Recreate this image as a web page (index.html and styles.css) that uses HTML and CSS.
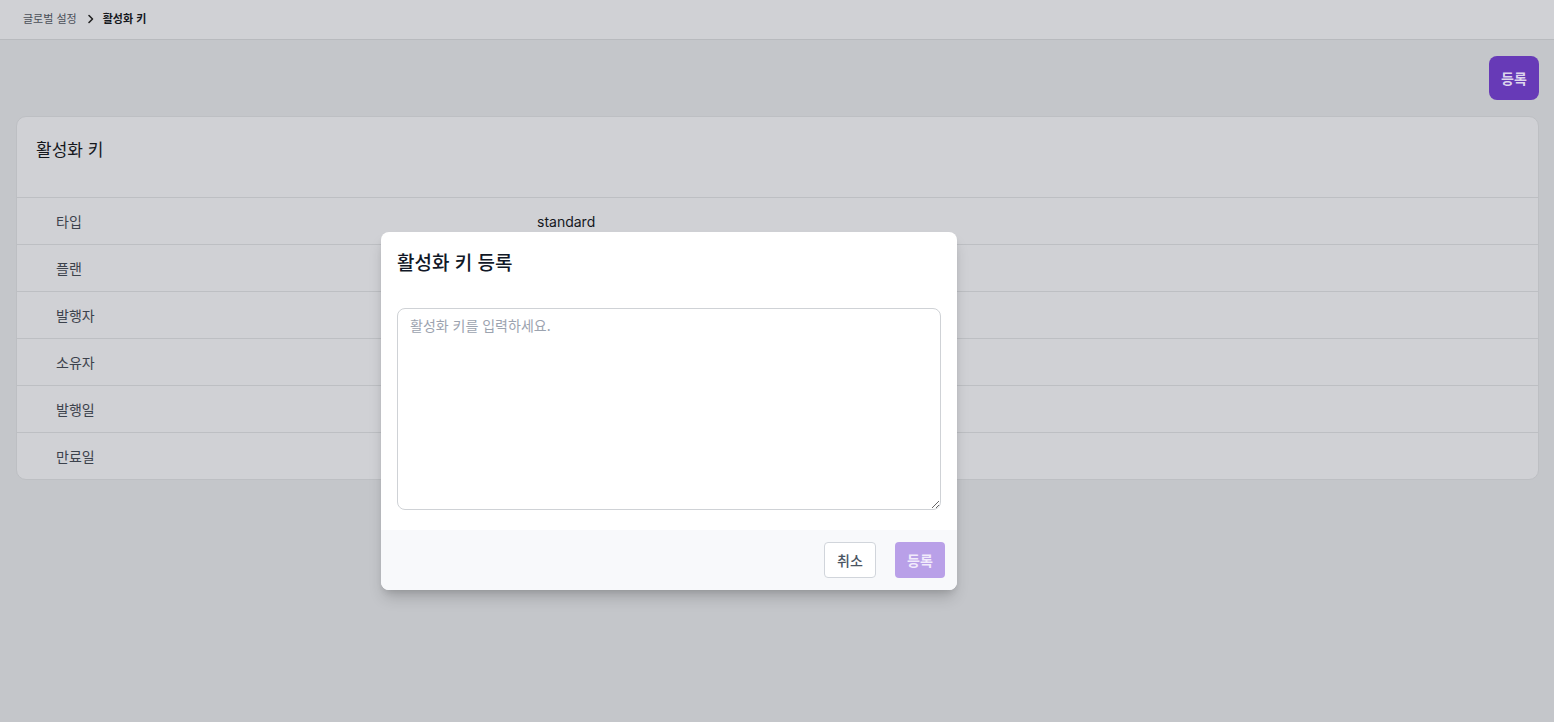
FILE: index.html
```html
<!DOCTYPE html>
<html lang="ko">
<head>
<meta charset="utf-8">
<link rel="stylesheet" href="styles.css">
</head>
<body>
<header class="topbar">
  <nav class="crumbs">
    <span class="crumb">글로벌 설정</span>
    <svg class="chev" width="8" height="10" viewBox="0 0 8 10"><path d="M2 1.5 L5.5 5 L2 8.5" fill="none" stroke="#222" stroke-width="1.6" stroke-linecap="round" stroke-linejoin="round"/></svg>
    <span class="crumb current">활성화 키</span>
  </nav>
</header>
<main class="main">
  <div class="actions"><button class="btn-primary">등록</button></div>
  <section class="card">
    <h2 class="card-title">활성화 키</h2>
    <div class="row"><span class="label">타입</span><span class="value">standard</span></div>
    <div class="row"><span class="label">플랜</span><span class="value"></span></div>
    <div class="row"><span class="label">발행자</span><span class="value"></span></div>
    <div class="row"><span class="label">소유자</span><span class="value"></span></div>
    <div class="row"><span class="label">발행일</span><span class="value"></span></div>
    <div class="row"><span class="label">만료일</span><span class="value"></span></div>
  </section>
</main>
<div class="modal">
  <div class="modal-body">
    <h3 class="modal-title">활성화 키 등록</h3>
    <textarea class="key-input" placeholder="활성화 키를 입력하세요."></textarea>
  </div>
  <div class="modal-footer">
    <button class="btn-cancel">취소</button>
    <button class="btn-submit" disabled>등록</button>
  </div>
</div>
</body>
</html>
```
FILE: styles.css
```css
* { box-sizing: border-box; }
html, body { margin: 0; padding: 0; }
body {
  background: #c4c6ca;
  font-family: "Noto Sans CJK KR", Inter, sans-serif;
  color: #1f2937;
  min-height: 722px;
}
.topbar {
  height: 40px;
  background: #d0d1d5;
  border-bottom: 1px solid #b8babe;
  display: flex;
  align-items: center;
  padding-left: 23px;
}
.crumbs { display: flex; align-items: center; gap: 5px; font-size: 11px; line-height: 16px; margin-top: -4px; }
.crumb { color: #4a4f58; }
.crumb.current { color: #15181d; font-weight: 700; }
.chev { margin: 2px 3px 0 5px; }
.main { padding: 16px 15px 0 16px; }
.actions { display: flex; justify-content: flex-end; }
.btn-primary {
  display: block;
  width: 50px; height: 44px;
  border: none; border-radius: 8px;
  background: #673ab7;
  color: #ddd5ec;
  font-family: inherit; font-size: 14px; font-weight: 700;
}
.card {
  margin-top: 16px;
  background: #d0d1d5;
  border: 1px solid #bdbfc3;
  border-radius: 10px;
  overflow: hidden;
}
.card-title {
  margin: 0;
  height: 80px;
  padding: 20px 19px 0;
  font-size: 17px; font-weight: 400; line-height: 24px;
  color: #15181d;
}
.row {
  display: flex;
  align-items: center;
  height: 47px;
  border-top: 1px solid #bdbfc3;
  font-size: 14px;
}
.label { width: 520px; padding-left: 39px; color: #3c424c; }
.value { color: #15181d; font-family: Inter, "Noto Sans CJK KR", sans-serif; }
.modal {
  position: absolute;
  left: 381px; top: 232px;
  width: 576px;
  background: #fff;
  border-radius: 8px;
  overflow: hidden;
  box-shadow: 0 10px 15px -3px rgba(0,0,0,0.18), 0 4px 6px -2px rgba(0,0,0,0.1);
}
.modal-body { padding: 16px 16px 20px; }
.modal-title {
  margin: 0 0 32px;
  font-size: 19px; font-weight: 500; line-height: 28px;
  color: #111827;
}
.key-input {
  display: block;
  width: 544px; height: 202px;
  margin: 0;
  border: 1px solid #cfd2d6;
  border-radius: 8px;
  padding: 6px 12px;
  font-family: inherit; font-size: 14px; line-height: 20px;
  color: #111827;
  resize: vertical;
}
.key-input::placeholder { color: #9ca3af; }
.modal-footer {
  height: 60px;
  background: #f8f9fb;
  display: flex; justify-content: flex-end; align-items: center;
  gap: 19px;
  padding-right: 12px;
}
.btn-cancel {
  width: 52px; height: 36px;
  background: #fff;
  border: 1px solid #d1d5db;
  border-radius: 4px;
  font-family: inherit; font-size: 14px; font-weight: 500;
  color: #4b5563;
}
.btn-submit {
  width: 50px; height: 36px;
  background: #b9a0e8;
  border: none; border-radius: 4px;
  font-family: inherit; font-size: 14px; font-weight: 700;
  color: #f1ebfb;
}
```
